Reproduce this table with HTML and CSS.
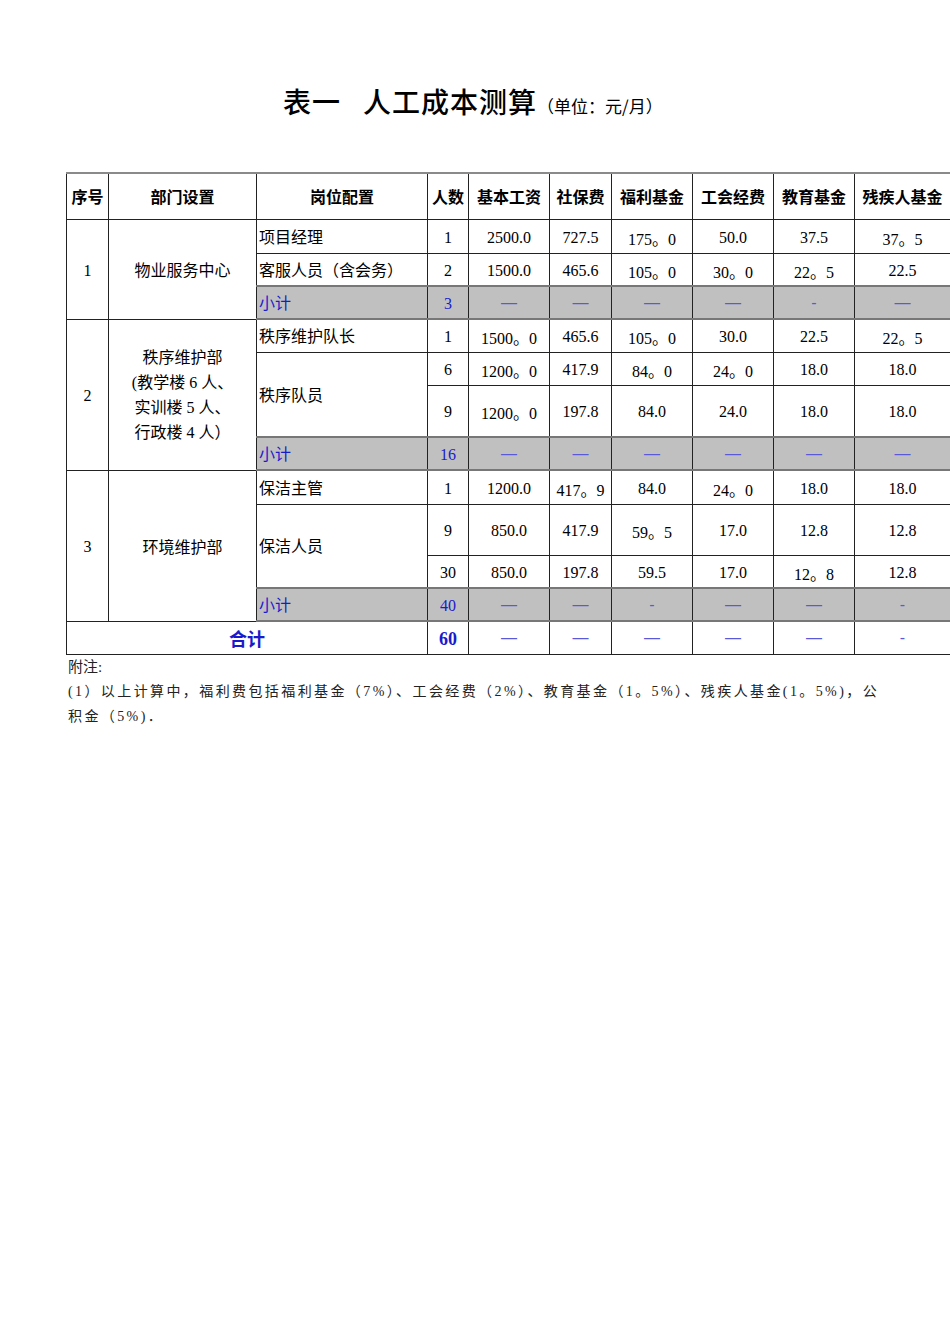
FILE: index.html
```html
<!DOCTYPE html>
<html lang="zh">
<head>
<meta charset="utf-8">
<title>表一 人工成本测算</title>
<link rel="stylesheet" href="styles.css">
</head>
<body>
<div class="page">
  <h1 class="title"><span class="t1">表一</span><span class="t2">人工成本测算</span><span class="unit">（单位：元/月）</span></h1>
  <table class="cost">
    <colgroup>
      <col class="c-no"><col class="c-dept"><col class="c-post"><col class="c-num"><col class="c-base"><col class="c-ss"><col class="c-wel"><col class="c-union"><col class="c-edu"><col class="c-dis">
    </colgroup>
    <thead>
      <tr class="h-head">
        <th>序号</th><th class="gl">部门设置</th><th class="gl">岗位配置</th><th>人数</th><th>基本工资</th><th>社保费</th><th>福利基金</th><th class="gl">工会经费</th><th>教育基金</th><th>残疾人基金</th>
      </tr>
    </thead>
    <tbody>
      <tr class="h34">
        <td rowspan="3" class="num">1</td><td rowspan="3" class="ctr gl">物业服务中心</td>
        <td class="post gl">项目经理</td><td class="num">1</td><td class="num">2500.0</td><td class="num">727.5</td><td class="num">175。0</td><td class="num gl">50.0</td><td class="num">37.5</td><td class="num">37。5</td>
      </tr>
      <tr class="h33">
        <td class="post gl">客服人员（含会务）</td><td class="num">2</td><td class="num">1500.0</td><td class="num">465.6</td><td class="num">105。0</td><td class="num gl">30。0</td><td class="num">22。5</td><td class="num">22.5</td>
      </tr>
      <tr class="h33 sub">
        <td class="post gl">小计</td><td class="num">3</td><td class="dash">—</td><td class="dash">—</td><td class="dash">—</td><td class="dash gl">—</td><td class="dash">-</td><td class="dash">—</td>
      </tr>

      <tr class="h33">
        <td rowspan="4" class="num">2</td>
        <td rowspan="4" class="ctr dept2 gl">秩序维护部<br>(教学楼 6 人、<br>实训楼 5 人、<br>行政楼 4 人）</td>
        <td class="post gl">秩序维护队长</td><td class="num">1</td><td class="num">1500。0</td><td class="num">465.6</td><td class="num">105。0</td><td class="num gl">30.0</td><td class="num">22.5</td><td class="num">22。5</td>
      </tr>
      <tr class="h33">
        <td rowspan="2" class="post gl">秩序队员</td><td class="num">6</td><td class="num">1200。0</td><td class="num">417.9</td><td class="num">84。0</td><td class="num gl">24。0</td><td class="num">18.0</td><td class="num">18.0</td>
      </tr>
      <tr class="h52">
        <td class="num">9</td><td class="num">1200。0</td><td class="num">197.8</td><td class="num">84.0</td><td class="num gl">24.0</td><td class="num">18.0</td><td class="num">18.0</td>
      </tr>
      <tr class="h33 sub">
        <td class="post gl">小计</td><td class="num">16</td><td class="dash">—</td><td class="dash">—</td><td class="dash">—</td><td class="dash gl">—</td><td class="dash">—</td><td class="dash">—</td>
      </tr>

      <tr class="h34">
        <td rowspan="4" class="num">3</td><td rowspan="4" class="ctr gl">环境维护部</td>
        <td class="post gl">保洁主管</td><td class="num">1</td><td class="num">1200.0</td><td class="num">417。9</td><td class="num">84.0</td><td class="num gl">24。0</td><td class="num">18.0</td><td class="num">18.0</td>
      </tr>
      <tr class="h51">
        <td rowspan="2" class="post gl">保洁人员</td><td class="num">9</td><td class="num">850.0</td><td class="num">417.9</td><td class="num">59。5</td><td class="num gl">17.0</td><td class="num">12.8</td><td class="num">12.8</td>
      </tr>
      <tr class="h33">
        <td class="num">30</td><td class="num">850.0</td><td class="num">197.8</td><td class="num">59.5</td><td class="num gl">17.0</td><td class="num">12。8</td><td class="num">12.8</td>
      </tr>
      <tr class="h33 sub">
        <td class="post gl">小计</td><td class="num">40</td><td class="dash">—</td><td class="dash">—</td><td class="dash">-</td><td class="dash gl">—</td><td class="dash">—</td><td class="dash">-</td>
      </tr>

      <tr class="h33 total">
        <td colspan="3" class="total-label">合计</td><td class="num total-num">60</td><td class="dash">—</td><td class="dash">—</td><td class="dash">—</td><td class="dash gl">—</td><td class="dash">—</td><td class="dash">-</td>
      </tr>
    </tbody>
  </table>
  <div class="notes">
    <p class="note-head">附注:</p>
    <p class="note">(1）以上计算中，福利费包括福利基金（7%）、工会经费（2%）、教育基金（1。5%）、残疾人基金(1。5%)，公<br>积金（5%)．</p>
  </div>
</div>
</body>
</html>
```

FILE: styles.css
```css
html, body {
  margin: 0;
  padding: 0;
  background: #fff;
}

.page {
  width: 950px;
  padding-top: 80px;
  color: #000;
  font-family: "Liberation Serif", "Noto Sans CJK SC", serif;
}

.title {
  margin: 0 0 54px 0;
  padding-left: 283px;
  height: 38px;
  line-height: 38px;
  font-family: "Noto Sans CJK SC", sans-serif;
  font-weight: 500;
  white-space: nowrap;
}

.title .t1 {
  font-size: 28px;
  letter-spacing: 1px;
  margin-right: 22px;
}

.title .t2 {
  font-size: 28px;
  letter-spacing: 1px;
}

.title .unit {
  font-size: 17px;
  font-weight: 400;
}

.cost {
  margin-left: 66px;
  border-collapse: collapse;
  table-layout: fixed;
  width: 884px;
  font-size: 16px;
}

.c-no { width: 42px; }
.c-dept { width: 148px; }
.c-post { width: 171px; }
.c-num { width: 41px; }
.c-base { width: 81px; }
.c-ss { width: 62px; }
.c-wel { width: 81px; }
.c-union { width: 81px; }
.c-edu { width: 81px; }
.c-dis { width: 96px; }

.cost th, .cost td {
  border: 1px solid #222;
  padding: 0;
  vertical-align: middle;
  white-space: nowrap;
  overflow: hidden;
}

.cost td.gl, .cost th.gl {
  border-left-color: #8a8a8a;
}

.cost thead tr th {
  border-top: 2px solid #8a8a8a;
  border-bottom: 1px solid #222;
}

.cost th {
  font-family: "Noto Sans CJK SC", sans-serif;
  font-weight: 700;
  font-size: 16px;
  text-align: center;
}

.h-head { height: 46px; }
.h34 { height: 34px; }
.h33 { height: 33px; }
.h52 { height: 52px; }
.h51 { height: 51px; }

.num, .ctr, .dash {
  text-align: center;
}

.cost td.num {
  padding-top: 3px;
}

.post {
  text-align: left;
  padding-left: 2px !important;
  padding-bottom: 1px !important;
}

.dept2 {
  line-height: 25px;
  padding-bottom: 0;
}

.sub td {
  background: #c0c0c0;
  color: #1a1acc;
  border-top: 2px solid #777;
  border-bottom: 2px solid #777;
}

.sub td.post, .total td {
  color: #1a1acc;
}

.dash {
  color: #5a5ad8;
  font-family: "Liberation Sans", sans-serif;
}

.sub td.dash, .total td.dash {
  color: #5a5ad8;
}

.total-label {
  text-align: center;
  font-family: "Noto Sans CJK SC", sans-serif;
  font-weight: 700;
  font-size: 18px;
  color: #1a1acc;
}

.total-num {
  font-weight: 700;
  font-size: 18px;
  color: #1a1acc !important;
}

.total td {
  border-bottom: 1px solid #222;
}

.notes {
  padding-left: 68px;
  font-family: "Liberation Serif", "Noto Sans CJK SC", serif;
  color: #222;
}

.notes p {
  margin: 0;
}

.note-head {
  font-size: 15px;
  line-height: 24px;
}

.note {
  font-size: 14px;
  line-height: 25px;
  letter-spacing: 2.4px;
  white-space: nowrap;
}
```
